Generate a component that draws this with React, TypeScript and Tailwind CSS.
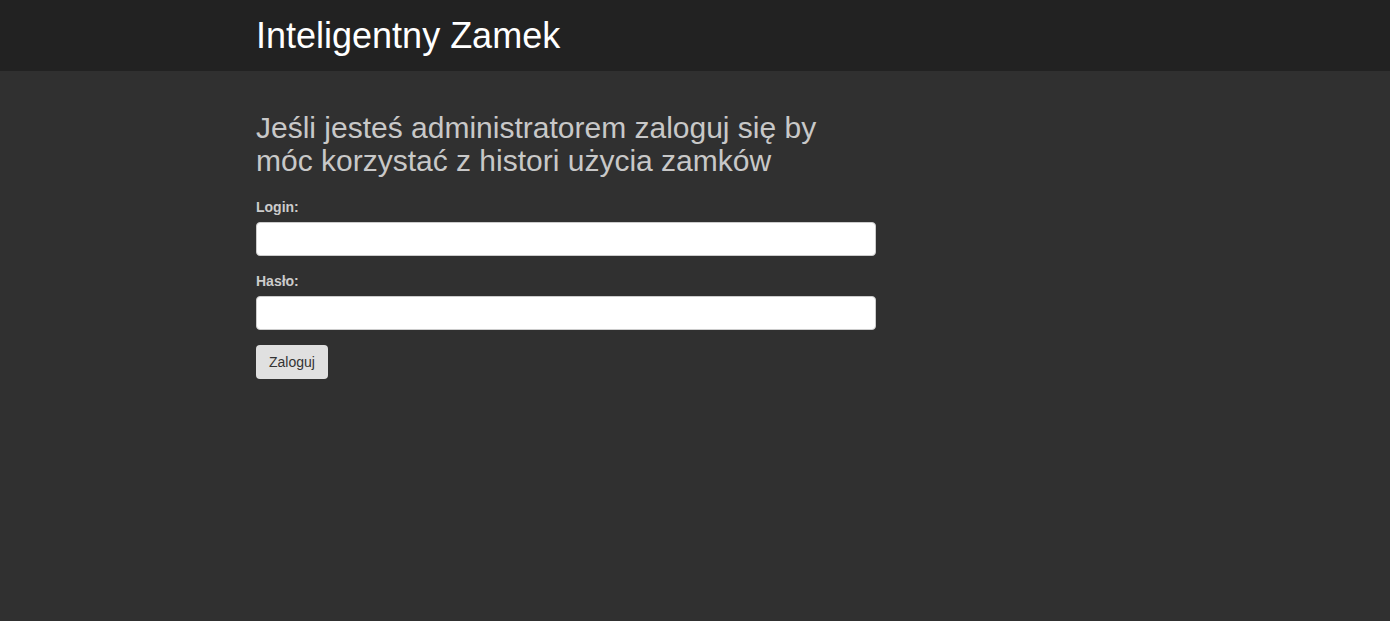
export default function App() {
  return (
    <div className="min-h-screen bg-[#303030]" style={{ fontFamily: '"Liberation Sans", Arial, sans-serif' }}>
      <header className="h-[71px] bg-[#222222] flex items-center">
        <div className="mx-auto w-[878px]">
          <h1 className="text-[36px] leading-[40px] text-white">Inteligentny Zamek</h1>
        </div>
      </header>
      <main className="mx-auto w-[878px] pt-[40px]">
        <div className="w-[620px]">
          <h3 className="text-[30px] leading-[33px] text-[#c8c8c8]">
            Jeśli jesteś administratorem zaloguj się by móc korzystać z histori użycia zamków
          </h3>
          <form className="mt-[20px]" onSubmit={(e) => e.preventDefault()}>
            <div className="mb-[15px]">
              <label className="block text-[14px] leading-[20px] font-bold text-[#cccccc] mb-[5px]">Login:</label>
              <input type="text" className="block w-full h-[34px] bg-white border border-[#cccccc] rounded-[4px] px-3 text-[14px] text-[#555]" />
            </div>
            <div className="mb-[15px]">
              <label className="block text-[14px] leading-[20px] font-bold text-[#cccccc] mb-[5px]">Hasło:</label>
              <input type="password" className="block w-full h-[34px] bg-white border border-[#cccccc] rounded-[4px] px-3 text-[14px] text-[#555]" />
            </div>
            <button type="submit" className="h-[34px] w-[72px] bg-[#e0e0e0] rounded-[4px] text-[14px] leading-[20px] text-[#333]">
              Zaloguj
            </button>
          </form>
        </div>
      </main>
    </div>
  );
}
